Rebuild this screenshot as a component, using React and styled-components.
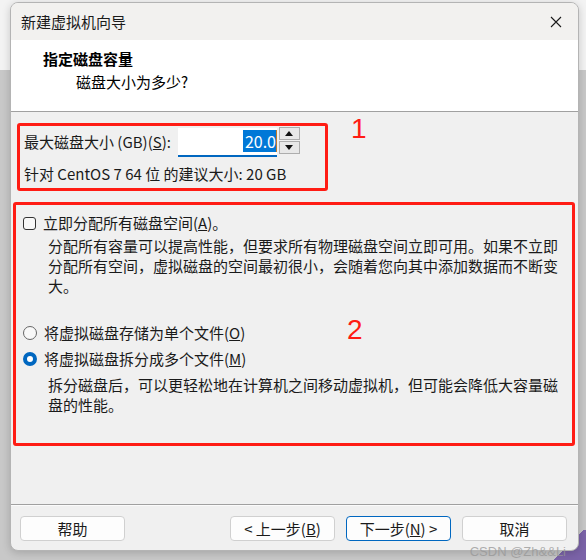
import React from "react";
import styled, { createGlobalStyle } from "styled-components";

const GlobalStyle = createGlobalStyle`
	html, body {
		margin: 0;
		padding: 0;
	}
	body {
		width: 586px;
		height: 560px;
		overflow: hidden;
		font-family: "Microsoft YaHei UI", "Noto Sans CJK SC", "Noto Sans", sans-serif;
		font-size: 15px;
		color: #1a1a1a;
	}
`;

function App() {
	return (
		<>
			<GlobalStyle />
			<Desktop>
				<Dialog>
					<TitleBar>
						<WindowTitle>新建虚拟机向导</WindowTitle>
						<CloseIcon viewBox="0 0 12 12">
							<path d="M1 1 L11 11 M11 1 L1 11" stroke="#1a1a1a" strokeWidth="1.1" />
						</CloseIcon>
					</TitleBar>

					<Header>
						<HeaderTitle>指定磁盘容量</HeaderTitle>
						<HeaderSub>磁盘大小为多少?</HeaderSub>
					</Header>

					<Body>
						<SizeBox>
							<SizeRow>
								<span>
									最大磁盘大小 (GB)(<u>S</u>):
								</span>
								<SizeInput>
									<Selected>20.0</Selected>
									<Caret />
								</SizeInput>
								<Spinner>
									<SpinButton>
										<Arrow $up />
									</SpinButton>
									<SpinButton>
										<Arrow />
									</SpinButton>
								</Spinner>
							</SizeRow>
							<Hint>针对 CentOS 7 64 位 的建议大小: 20 GB</Hint>
						</SizeBox>

						<OptionsBox>
							<OptionRow>
								<Checkbox />
								<span>
									立即分配所有磁盘空间(<u>A</u>)。
								</span>
							</OptionRow>
							<Note>
								分配所有容量可以提高性能，但要求所有物理磁盘空间立即可用。如果不立即分配所有空间，虚拟磁盘的空间最初很小，会随着您向其中添加数据而不断变大。
							</Note>

							<OptionRow $top={27}>
								<Radio />
								<span>
									将虚拟磁盘存储为单个文件(<u>O</u>)
								</span>
							</OptionRow>
							<OptionRow $top={6}>
								<Radio $checked />
								<span>
									将虚拟磁盘拆分成多个文件(<u>M</u>)
								</span>
							</OptionRow>
							<Note $top={6}>
								拆分磁盘后，可以更轻松地在计算机之间移动虚拟机，但可能会降低大容量磁盘的性能。
							</Note>
						</OptionsBox>

						<Mark $x={340} $y={1}>1</Mark>
						<Mark $x={336} $y={202}>2</Mark>
					</Body>

					<Footer>
						<Button>帮助</Button>
						<Spacer />
						<Button>
							&lt; 上一步(<u>B</u>)
						</Button>
						<Button $primary>
							下一步(<u>N</u>) &gt;
						</Button>
						<Button>取消</Button>
					</Footer>
				</Dialog>
				<Watermark>CSDN @Zh&amp;&amp;Li</Watermark>
			</Desktop>
		</>
	);
}

export default App;

const Desktop = styled.div`
	position: relative;
	width: 586px;
	height: 560px;
	box-sizing: border-box;
	padding: 2px 0 0 10px;
	background:
		linear-gradient(135deg, transparent 50%, #7b63a8 50%) right bottom / 34px 30px no-repeat,
		linear-gradient(to bottom, #f3f3f3 0 70px, #c8c8c8 70px);
`;

const Dialog = styled.div`
	width: 569px;
	height: 549px;
	box-sizing: border-box;
	border: 1px solid #b4b4b4;
	border-radius: 8px;
	overflow: hidden;
	display: flex;
	flex-direction: column;
	background: #f0f0f0;
	box-shadow: 0 2px 8px rgba(0, 0, 0, 0.18);
`;

const TitleBar = styled.div`
	height: 37px;
	flex: none;
	display: flex;
	align-items: center;
	justify-content: space-between;
	padding: 0 16px 0 10px;
	background: #f2f1ef;
`;

const WindowTitle = styled.div`
	font-size: 15px;
	line-height: 20px;
	color: #1b1b1b;
`;

const CloseIcon = styled.svg`
	width: 12px;
	height: 12px;
`;

const Header = styled.div`
	height: 72px;
	flex: none;
	box-sizing: border-box;
	padding: 9px 0 0 32px;
	background: #ffffff;
	border-bottom: 1px solid #a0a0a0;
`;

const HeaderTitle = styled.div`
	font-weight: 700;
	font-size: 15px;
	line-height: 20px;
	color: #000;
`;

const HeaderSub = styled.div`
	margin: 3px 0 0 33px;
	line-height: 20px;
	color: #000;
`;

const Body = styled.div`
	position: relative;
	height: 392px;
	flex: none;
	box-sizing: border-box;
	padding: 11px 0 0 2px;
	line-height: 20px;
`;

const SizeBox = styled.div`
	width: 311px;
	height: 68px;
	margin-left: 4px;
	box-sizing: border-box;
	border: 3px solid #ff1c14;
	border-radius: 3px;
	padding: 1px 0 0 4px;
`;

const SizeRow = styled.div`
	display: flex;
	align-items: center;
	height: 30px;
	gap: 7px;
`;

const SizeInput = styled.div`
	width: 99px;
	height: 29px;
	box-sizing: border-box;
	display: flex;
	align-items: center;
	justify-content: flex-end;
	background: #fff;
	border-bottom: 2px solid #0067c0;
	font-size: 16px;
`;

const Selected = styled.span`
	background: #0078d7;
	color: #fff;
	line-height: 22px;
	padding-left: 2px;
`;

const Caret = styled.span`
	width: 1px;
	height: 22px;
	background: #c07a2a;
`;

const Spinner = styled.div`
	display: flex;
	flex-direction: column;
	margin-left: -5px;
	align-self: flex-start;
	margin-top: 0;
`;

const SpinButton = styled.div`
	width: 21px;
	height: 13px;
	box-sizing: border-box;
	border: 1px solid #adadad;
	background: #e8e8e8;
	display: flex;
	align-items: center;
	justify-content: center;
	& + & {
		margin-top: 1px;
	}
`;

const Arrow = styled.span`
	width: 0;
	height: 0;
	border-left: 4px solid transparent;
	border-right: 4px solid transparent;
	${(p) => (p.$up ? "border-bottom: 5px solid #111;" : "border-top: 5px solid #111;")}
`;

const Hint = styled.div`
	margin-top: 7px;
	line-height: 20px;
`;

const OptionsBox = styled.div`
	width: 562px;
	height: 244px;
	margin-top: 11px;
	box-sizing: border-box;
	border: 3px solid #ff1c14;
	border-radius: 3px;
	padding: 8px 0 0 7px;
`;

const OptionRow = styled.div`
	display: flex;
	align-items: center;
	gap: 7px;
	height: 20px;
	margin-top: ${(p) => p.$top || 0}px;
`;

const Checkbox = styled.span`
	width: 13px;
	height: 13px;
	box-sizing: border-box;
	border: 1px solid #333;
	border-radius: 3px;
	background: #f8f8f8;
`;

const Radio = styled.span`
	width: 14px;
	height: 14px;
	box-sizing: border-box;
	border-radius: 50%;
	border: ${(p) => (p.$checked ? "4px solid #0067c0" : "1px solid #666")};
	background: ${(p) => (p.$checked ? "#fff" : "#f8f8f8")};
`;

const Note = styled.p`
	margin: ${(p) => p.$top || 3}px 0 0 25px;
	width: 514px;
	line-height: 20px;
`;

const Mark = styled.div`
	position: absolute;
	left: ${(p) => p.$x}px;
	top: ${(p) => p.$y}px;
	font-family: "Liberation Sans", "DejaVu Sans", sans-serif;
	font-size: 28px;
	line-height: 32px;
	color: #ff1c14;
`;

const Footer = styled.div`
	flex: 1;
	display: flex;
	align-items: flex-start;
	gap: 11px;
	padding: 11px 11px 0 9px;
	border-top: 1px solid #a0a0a0;
	box-shadow: inset 0 1px #fbfbfb;
`;

const Spacer = styled.div`
	flex: 1;
`;

const Button = styled.button`
	width: 105px;
	height: 25px;
	box-sizing: border-box;
	padding: 0;
	font-family: inherit;
	font-size: 15px;
	line-height: 20px;
	color: #1a1a1a;
	background: #fdfdfd;
	border: 1px solid ${(p) => (p.$primary ? "#0067c0" : "#d0d0d0")};
	border-radius: 4px;
`;

const Watermark = styled.div`
	position: absolute;
	right: 20px;
	bottom: 1px;
	font-family: "Liberation Sans", sans-serif;
	font-size: 13px;
	color: rgba(150, 150, 150, 0.75);
`;
